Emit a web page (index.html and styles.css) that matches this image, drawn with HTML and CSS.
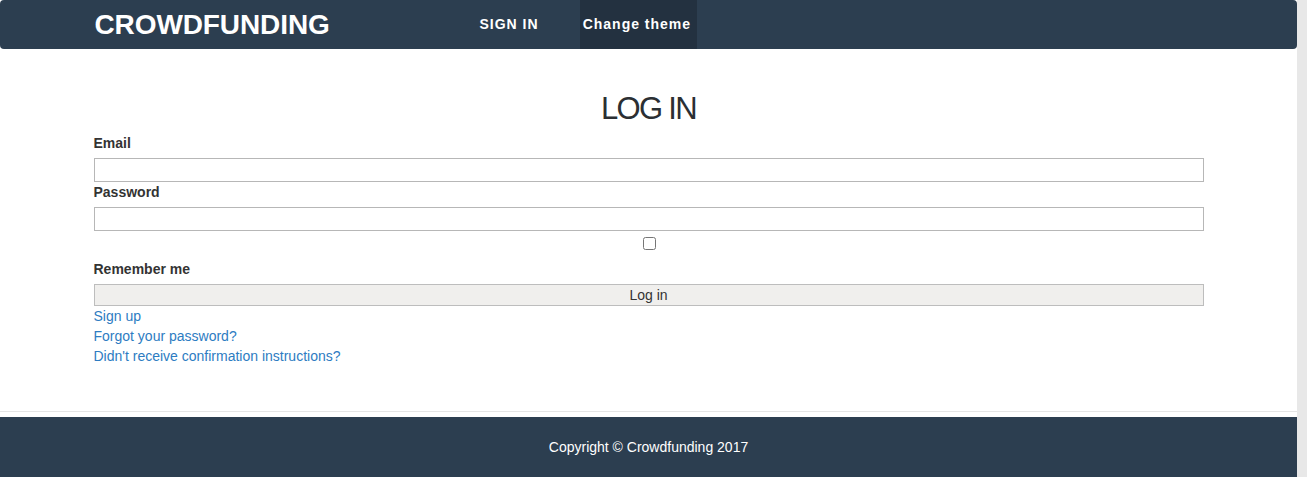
FILE: index.html
```html
<!DOCTYPE html>
<html lang="en">
<head>
<meta charset="utf-8">
<title>Crowdfunding - Log in</title>
<link rel="stylesheet" href="styles.css">
</head>
<body>
<div class="page">
  <header class="navbar">
    <div class="container nav-inner">
      <a class="brand" href="#">CROWDFUNDING</a>
      <nav class="nav-links">
        <a class="nav-link" href="#">SIGN IN</a>
        <a class="nav-link theme" href="#">Change theme</a>
      </nav>
    </div>
  </header>

  <main class="container main">
    <h2 class="title">LOG IN</h2>
    <form class="form">
      <label class="label" for="email">Email</label>
      <input class="field" type="email" id="email">
      <label class="label" for="password">Password</label>
      <input class="field" type="password" id="password">
      <div class="check-row"><input class="check" type="checkbox" id="remember"></div>
      <label class="label" for="remember">Remember me</label>
      <button class="submit" type="button">Log in</button>
    </form>
    <div class="links">
      <a href="#">Sign up</a>
      <a href="#">Forgot your password?</a>
      <a href="#">Didn't receive confirmation instructions?</a>
    </div>
  </main>

  <hr class="rule">
  <footer class="footer">Copyright © Crowdfunding 2017</footer>
</div>
<div class="scrollbar"></div>
</body>
</html>
```

FILE: styles.css
```css
html, body {
  margin: 0;
  padding: 0;
}
body {
  display: flex;
  min-height: 477px;
  font-family: "Liberation Sans", Arial, sans-serif;
  font-size: 14px;
  line-height: 20px;
  color: #333;
  background: #fff;
}
.page {
  flex: 1;
  min-width: 0;
  display: flex;
  flex-direction: column;
}
.scrollbar {
  width: 10px;
  flex: none;
  background: #e8e8e8;
}
.container {
  width: 1140px;
  margin: 0 auto;
  padding: 0 15px;
  box-sizing: border-box;
}
.navbar {
  height: 49px;
  background: #2c3e50;
  border-radius: 4px;
}
.nav-inner {
  display: flex;
  align-items: stretch;
  height: 49px;
}
.brand {
  width: 386px;
  flex: none;
  color: #fff;
  text-decoration: none;
  font-weight: bold;
  font-size: 28px;
  letter-spacing: -0.1px;
  line-height: 49px;
  padding-left: 1px;
  box-sizing: border-box;
}
.nav-links {
  display: flex;
  align-items: stretch;
}
.nav-link {
  color: #fff;
  text-decoration: none;
  font-weight: bold;
  font-size: 14px;
  letter-spacing: 1px;
  line-height: 49px;
}
.nav-link:first-child {
  margin-right: 41px;
}
.nav-link.theme {
  background: #233140;
  padding: 0 6px 0 3px;
}
.main {
  padding-top: 47px;
}
.title {
  margin: -7px 0 0;
  text-align: center;
  font-weight: normal;
  font-size: 31px;
  letter-spacing: -1.7px;
  line-height: 40px;
  height: 44px;
  color: #2b2f33;
}
.form {
  display: flex;
  flex-direction: column;
}
.label {
  display: block;
  font-weight: bold;
  margin-bottom: 5px;
}
.field {
  display: block;
  width: 100%;
  height: 24px;
  margin: 0;
  box-sizing: border-box;
  border: 1px solid #b7b7b7;
  border-radius: 0;
  padding: 0 4px;
  background: #fff;
  font: inherit;
}
.check-row {
  padding-top: 6px;
  margin-bottom: 9px;
  display: flex;
  justify-content: center;
}
.check {
  width: 13px;
  height: 13px;
  margin: 0 0 0 1px;
}
.submit {
  display: block;
  width: 100%;
  height: 22px;
  margin: 0;
  padding: 0;
  box-sizing: border-box;
  border: 1px solid #bdbdbd;
  border-radius: 0;
  background: #f0efed;
  color: #333;
  font-family: "Liberation Sans", Arial, sans-serif;
  font-size: 14px;
  line-height: 20px;
}
.links {
  display: flex;
  flex-direction: column;
  align-items: flex-start;
}
.links a {
  color: #2d7cc2;
  text-decoration: none;
  line-height: 20px;
}
.rule {
  margin: 45px 0 5px;
  border: 0;
  border-top: 1px solid #e5e5e5;
  height: 0;
}
.footer {
  background: #2c3e50;
  color: #fff;
  text-align: center;
  padding: 20px 0 20px;
  flex: 1;
}
```
